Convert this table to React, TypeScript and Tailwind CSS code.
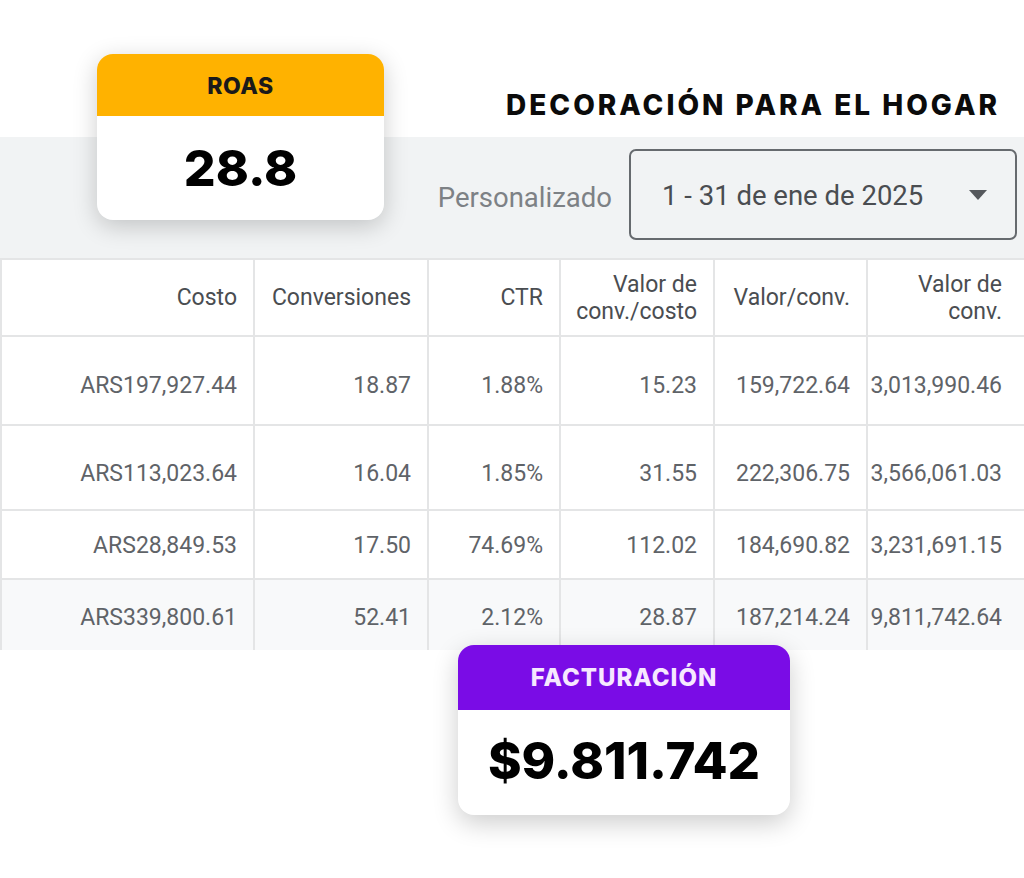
import React from "react";

const cols = "grid-cols-[253px_174px_132px_154px_153px_156px]";

type Row = { h: string; pt: string; bg: string; border: boolean; cells: string[] };

const rows: Row[] = [
  { h: "h-[89px]", pt: "pt-[11px]", bg: "bg-white", border: true, cells: ["ARS197,927.44", "18.87", "1.88%", "15.23", "159,722.64", "3,013,990.46"] },
  { h: "h-[85px]", pt: "pt-[14px]", bg: "bg-white", border: true, cells: ["ARS113,023.64", "16.04", "1.85%", "31.55", "222,306.75", "3,566,061.03"] },
  { h: "h-[69px]", pt: "pt-[4px]", bg: "bg-white", border: true, cells: ["ARS28,849.53", "17.50", "74.69%", "112.02", "184,690.82", "3,231,691.15"] },
  { h: "h-[70px]", pt: "pt-[6px]", bg: "bg-[#f8f9fa]", border: false, cells: ["ARS339,800.61", "52.41", "2.12%", "28.87", "187,214.24", "9,811,742.64"] },
];

const headers: React.ReactNode[] = [
  "Costo",
  "Conversiones",
  "CTR",
  <>Valor de<br />conv./costo</>,
  "Valor/conv.",
  <>Valor de<br />conv.</>,
];

export default function App() {
  const roboto = { fontFamily: "Roboto, 'Liberation Sans', sans-serif" };
  const display = { fontFamily: "Inter, 'DejaVu Sans', sans-serif" };
  return (
    <div className="relative w-[1024px] h-[878px] bg-white overflow-hidden">
      {/* Title */}
      <div className="h-[137px] flex justify-end items-start pt-[88px] pr-[24px]">
        <h1 style={display} className="text-[28px] leading-[34px] font-extrabold tracking-[3px] text-[#0b0b0b]">
          DECORACIÓN PARA EL HOGAR
        </h1>
      </div>

      {/* Gray band with date selector */}
      <div style={roboto} className="h-[121px] bg-[#f1f3f4] flex items-start justify-end pr-[7px] pt-[12px]">
        <span className="text-[27.5px] text-[#7d8185] mt-[28px] mr-[17px]">Personalizado</span>
        <div className="w-[388px] h-[91px] border-2 border-[#666a6e] rounded-[7px] flex items-center justify-between pl-[31px] pr-[28px]">
          <span className="text-[27.5px] text-[#4a4d51] pt-[2px]">1 - 31 de ene de 2025</span>
          <svg width="18" height="10" viewBox="0 0 18 10">
            <path d="M0 0 L18 0 L9 10 Z" fill="#55585c" />
          </svg>
        </div>
      </div>

      {/* Table */}
      <div style={roboto} className="border-t-2 border-l-2 border-[#e4e5e6] text-[23px]">
        <div className={`grid ${cols} h-[77px]`}>
          {headers.map((h, i) => (
            <div
              key={i}
              className={`border-b-2 ${i < 5 ? "border-r-2 pr-[16px]" : "pr-[22px]"} border-[#e4e5e6] flex items-center justify-end text-right leading-[27px] text-[#4a4d51]`}
            >
              <span>{h}</span>
            </div>
          ))}
        </div>
        {rows.map((r, ri) => (
          <div key={ri} className={`grid ${cols} ${r.h} ${r.bg}`}>
            {r.cells.map((c, i) => (
              <div
                key={i}
                className={`${r.border ? "border-b-2" : ""} ${i < 5 ? "border-r-2 pr-[16px]" : "pr-[22px]"} border-[#e4e5e6] flex items-center justify-end ${r.pt} text-[#5f6368]`}
              >
                {c}
              </div>
            ))}
          </div>
        ))}
      </div>

      {/* ROAS card */}
      <div className="absolute left-[97px] top-[54px] w-[287px] h-[166px] rounded-[16px] bg-white overflow-hidden shadow-[0_6px_24px_rgba(0,0,0,0.2)] flex flex-col">
        <div className="h-[62px] bg-[#ffb200] flex items-center justify-center pt-[3px]">
          <span style={display} className="text-[23px] font-extrabold text-[#1a1a1a] tracking-[0.5px]">ROAS</span>
        </div>
        <div className="flex-1 flex items-center justify-center">
          <span style={display} className="text-[50px] font-extrabold text-black leading-none">28.8</span>
        </div>
      </div>

      {/* FACTURACIÓN card */}
      <div className="absolute left-[458px] top-[645px] w-[332px] h-[170px] rounded-[16px] bg-white overflow-hidden shadow-[0_8px_26px_rgba(0,0,0,0.2)] flex flex-col">
        <div className="h-[65px] bg-[#7a0ce6] flex items-center justify-center">
          <span style={display} className="text-[24px] font-extrabold text-[#f6e8ff] tracking-[1px]">FACTURACIÓN</span>
        </div>
        <div className="h-[105px] flex items-start justify-center pt-[25px]">
          <span style={display} className="text-[51px] font-extrabold text-black leading-none">$9.811.742</span>
        </div>
      </div>
    </div>
  );
}
